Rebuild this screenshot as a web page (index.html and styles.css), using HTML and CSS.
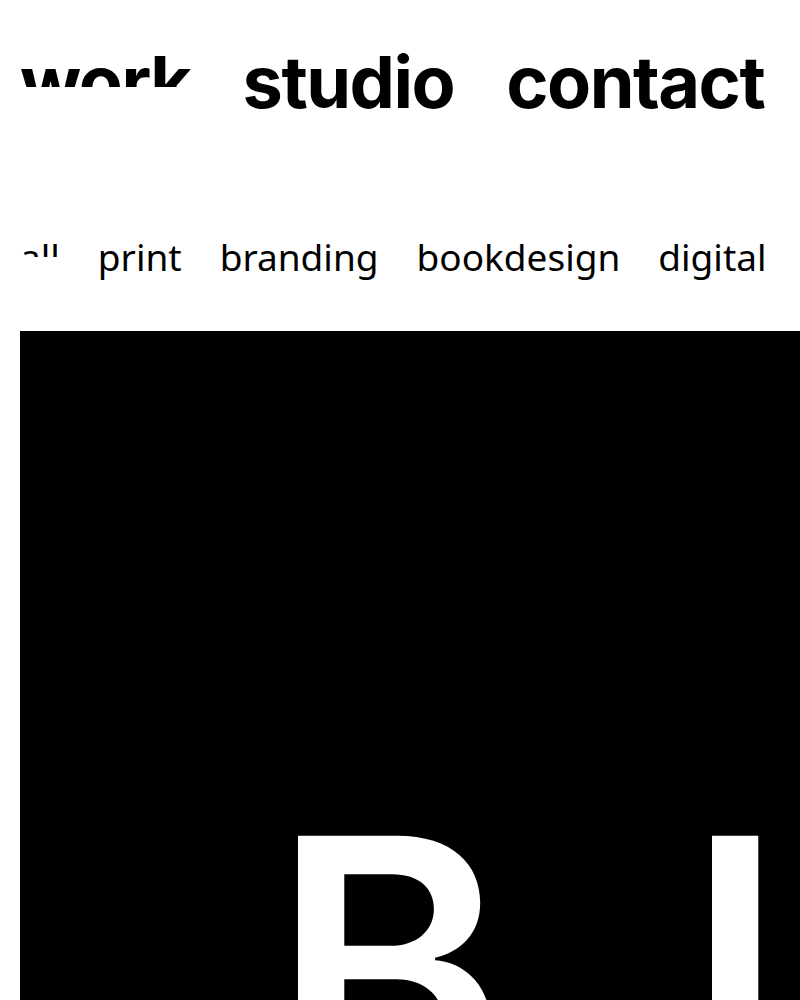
FILE: index.html
```html
<!DOCTYPE html>
<html lang="en">
<head>
<meta charset="utf-8">
<title>work</title>
<link rel="stylesheet" href="styles.css">
</head>
<body>
  <header class="site-header">
    <nav class="main-nav">
      <a class="main-link is-active" href="#">work</a>
      <a class="main-link" href="#">studio</a>
      <a class="main-link" href="#">contact</a>
    </nav>
  </header>
  <nav class="filters">
    <a class="filter is-active" href="#">all</a>
    <a class="filter" href="#">print</a>
    <a class="filter" href="#">branding</a>
    <a class="filter" href="#">bookdesign</a>
    <a class="filter" href="#">digital</a>
  </nav>
  <main class="grid">
    <figure class="project">
      <div class="project-art">
        <span class="art-letter art-b">B</span>
        <span class="art-letter art-i">I</span>
      </div>
    </figure>
  </main>
</body>
</html>
```

FILE: styles.css
```css
html, body {
  margin: 0;
  padding: 0;
  background: #fff;
  overflow-x: hidden;
}

body {
  color: #000;
  font-family: "Noto Sans", "Liberation Sans", sans-serif;
}

a {
  color: inherit;
  text-decoration: none;
}

.site-header {
  padding: 46px 20px 0;
}

.main-nav {
  display: flex;
  gap: 52px;
  font-family: Inter, "Liberation Sans", sans-serif;
  font-weight: 700;
  font-size: 72px;
  line-height: 1;
  letter-spacing: -1.5px;
  white-space: nowrap;
}

.main-link {
  display: inline-block;
}

.main-link.is-active {
  clip-path: inset(0 0 31px 0);
}

.filters {
  display: flex;
  gap: 38px;
  padding: 120px 20px 0;
  font-size: 37px;
  line-height: 1;
  white-space: nowrap;
}

.filter {
  display: inline-block;
}

.filter.is-active {
  clip-path: inset(0 0 18px 0);
}

.grid {
  padding: 56px 0 0 20px;
}

.project {
  margin: 0;
  width: 820px;
}

.project-art {
  background: #000;
  height: 760px;
  display: flex;
  align-items: flex-start;
  padding: 457px 0 0 252px;
  box-sizing: border-box;
  font-family: Inter, "Liberation Sans", sans-serif;
  font-weight: 600;
  font-size: 355px;
  line-height: 1;
  color: #fff;
  gap: 180px;
}

.art-letter {
  display: block;
}
```
